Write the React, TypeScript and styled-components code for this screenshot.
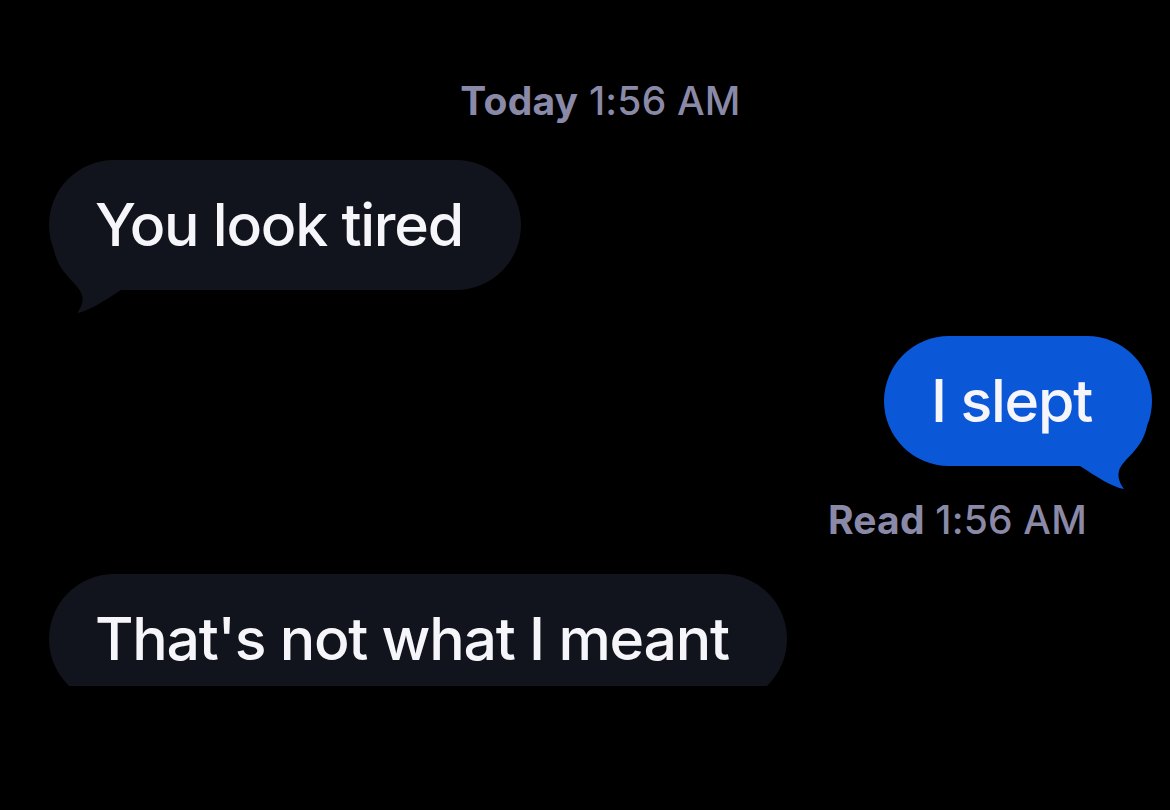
import React from "react";
import styled, { createGlobalStyle } from "styled-components";

const Global = createGlobalStyle`
  html, body { margin: 0; padding: 0; background: #000; }
  body { font-family: Inter, "Noto Sans", "Liberation Sans", sans-serif; -webkit-font-smoothing: antialiased; }
`;

const DARK = "#11141c";
const BLUE = "#0a58d7";

const Page = styled.div`
  width: 1170px;
  height: 810px;
  background: #000;
  box-sizing: border-box;
  padding: 77px 18px 0 49px;
  display: flex;
  flex-direction: column;
  overflow: hidden;
`;

const Stamp = styled.div<{ $align: "center" | "end"; $mt: number; $mr?: number }>`
  align-self: ${(p) => (p.$align === "center" ? "center" : "flex-end")};
  margin-top: ${(p) => p.$mt}px;
  margin-right: ${(p) => p.$mr ?? 0}px;
  font-size: 39px;
  line-height: 47px;
  color: #8a8aa8;
  font-weight: 500;
  letter-spacing: 0.2px;
  white-space: nowrap;
  b { font-weight: 700; }
`;

const Row = styled.div<{ $side: "in" | "out"; $mt: number; $clip?: number }>`
  display: flex;
  justify-content: ${(p) => (p.$side === "in" ? "flex-start" : "flex-end")};
  margin-top: ${(p) => p.$mt}px;
  ${(p) => (p.$clip ? `height: ${p.$clip}px; overflow: hidden; align-items: flex-start;` : "")}
`;

const Bubble = styled.div<{ $side: "in" | "out" }>`
  position: relative;
  height: 130px;
  box-sizing: border-box;
  display: flex;
  align-items: center;
  padding: 0 ${(p) => (p.$side === "in" ? 58 : 60)}px 0 ${(p) => (p.$side === "in" ? 46 : 47)}px;
  border-radius: 65px;
  background: ${(p) => (p.$side === "in" ? DARK : BLUE)};
  color: #f5f5fa;
  font-size: 59px;
  line-height: 1.21;
  font-weight: 500;
  letter-spacing: -1.25px;
  white-space: nowrap;
`;

const TailSvg = styled.svg<{ $side: "in" | "out" }>`
  position: absolute;
  bottom: -23px;
  ${(p) => (p.$side === "in" ? "left: 0;" : "right: 0; transform: scaleX(-1);")}
  width: 90px;
  height: 63px;
  overflow: visible;
`;

function Tail({ side }: { side: "in" | "out" }) {
  return (
    <TailSvg $side={side} viewBox="0 0 90 63">
      <path
        d="M5 0 C 10 25, 30 33, 33 45 C 35 52, 31 59, 28 63 C 40 61, 55 51, 72 40 L 72 0 Z"
        fill={side === "in" ? DARK : BLUE}
      />
    </TailSvg>
  );
}

export default function App() {
  return (
    <>
      <Global />
      <Page>
        <Stamp $align="center" $mt={0}>
          <b>Today</b> 1:56 AM
        </Stamp>
        <Row $side="in" $mt={36}>
          <Bubble $side="in">
            You look tired
            <Tail side="in" />
          </Bubble>
        </Row>
        <Row $side="out" $mt={46}>
          <Bubble $side="out">
            I slept
            <Tail side="out" />
          </Bubble>
        </Row>
        <Stamp $align="end" $mt={30} $mr={65}>
          <b>Read</b> 1:56 AM
        </Stamp>
        <Row $side="in" $mt={31} $clip={112}>
          <Bubble $side="in">That's not what I meant</Bubble>
        </Row>
      </Page>
    </>
  );
}
